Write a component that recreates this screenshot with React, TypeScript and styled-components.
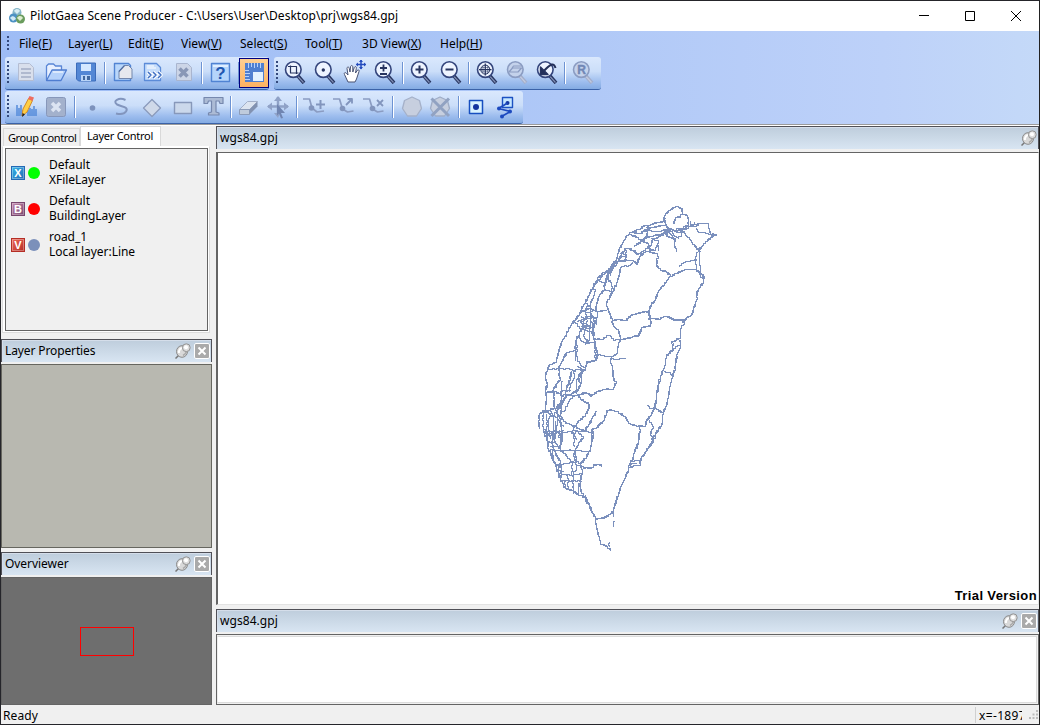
import React from "react";
import styled, { createGlobalStyle } from "styled-components";

const Global = createGlobalStyle`
  *{box-sizing:border-box}
  body{margin:0;background:#f0f0f0;font:12px/15px "Noto Sans","Open Sans",sans-serif;color:#000}
  svg{display:block;flex:none}
`;
const Window = styled.div`
  width:1040px;height:725px;border:1px solid #25252a;border-right-color:#222;
  display:flex;flex-direction:column;background:#f0f0f0;overflow:hidden;
`;
const TitleBar = styled.header`
  height:30px;flex:none;background:#fff;display:flex;align-items:center;padding-left:8px;
`;
const Title = styled.h1`
  font:inherit;font-size:12px;margin:0 auto 0 5px;padding-bottom:1px;white-space:pre;letter-spacing:.035px;
`;
const WinButton = styled.button`
  width:46px;height:29px;border:0;padding:0;background:none;display:grid;place-items:center;
`;
const Bars = styled.div`
  height:95px;flex:none;background:linear-gradient(90deg,#9ebcf5 0%,#a9c4f6 40%,#bdd1f9 85%,#c4d9f8 100%);
  border-bottom:1px solid #fff;box-shadow:inset 0 -1px #9b9b9b;display:flex;flex-direction:column;
`;
const MenuBar = styled.nav`
  height:26px;display:flex;align-items:center;padding-left:6px;
`;
const MenuItem = styled.a<{ $w: number }>`
  width:${p => p.$w}px;margin-right:17px;padding-bottom:2px;white-space:pre;letter-spacing:.02px;flex:none;
`;
const Grip = styled.i<{ $rows: number; $gap: number }>`
  width:3px;height:${p => p.$rows * 4}px;flex:none;margin-right:${p => p.$gap}px;
  background:linear-gradient(#34497c 0 2px,transparent 2px) 0 0/2px 4px repeat-y;
`;
const BarRow = styled.div`display:flex;gap:5px;padding-left:4px;height:34px;`;
const Toolbar = styled.div<{ $w: number; $lift?: number }>`
  width:${p => p.$w}px;height:33px;display:flex;align-items:center;padding-left:2px;flex:none;
  border-radius:3px;background:linear-gradient(#dae8fd 0%,#cbdef9 45%,#9dbdee 78%,#84abe3 100%);
  border-bottom:1px solid #3a62a8;
  & svg{margin-bottom:${p => p.$lift ?? 0}px}
`;
const ToolButton = styled.button<{ $on?: boolean }>`
  width:30px;height:30px;padding:0;flex:none;display:grid;place-items:center;
  border:${p => (p.$on ? "1px solid #000080" : "0")};
  background:${p => (p.$on ? "linear-gradient(#ffd092,#fdb262)" : "none")};
`;
const Sep = styled.i<{ $w?: number }>`
  width:${p => p.$w ?? 6}px;height:22px;flex:none;
  background:linear-gradient(90deg,#6d93d3 0 1px,#fff 1px 2px) 3px 0/2px 100% no-repeat;
`;
const Body = styled.main`flex:1;min-height:0;display:flex;`;
const Side = styled.aside`width:211px;flex:none;display:flex;flex-direction:column;`;
const Work = styled.section`width:823px;margin-left:4px;flex:none;display:flex;flex-direction:column;`;
const Tabs = styled.div`height:20px;display:flex;align-items:flex-end;padding-left:2px;flex:none;`;
const Tab = styled.div<{ $on?: boolean; $w: number }>`
  width:${p => p.$w}px;height:${p => (p.$on ? 20 : 18)}px;line-height:${p => (p.$on ? 18 : 17)}px;
  background:${p => (p.$on ? "#fff" : "#f0f0f0")};border:1px solid #d9d9d9;border-bottom:0;
  padding-left:${p => (p.$on ? 6 : 4)}px;font-size:11px;letter-spacing:${p => (p.$on ? -0.25 : -0.4)}px;white-space:nowrap;
`;
const TabPage = styled.div`
  height:187px;width:208px;margin-left:1px;flex:none;padding:1px 1px 1px 2px;background:#fff;border:1px solid #dcdcdc;border-top-color:#fff;
`;
const List = styled.ul`
  margin:0;padding:7px 0 0 5px;list-style:none;height:183px;width:203px;border:1px solid #646464;background:#f0f0f0;
`;
const Item = styled.li`height:36px;display:flex;align-items:center;padding-bottom:4px;letter-spacing:-.04px;`;
const Dot = styled.i<{ $c: string }>`
  width:12px;height:12px;border-radius:50%;background:${p => p.$c};margin:2px 9px 0 3px;
`;
const Square = styled.i<{ $a: string; $b: string }>`
  width:14px;height:14px;margin-top:2px;border:1px solid ${p => p.$b};
  background:linear-gradient(135deg,${p => p.$a},${p => p.$b});display:grid;place-items:center;
  font:bold 11px/12px "Liberation Sans",sans-serif;color:#fff;box-shadow:inset 0 0 0 1px #ffffff50;
`;
const Caption = styled.div<{ $mt?: number }>`
  height:23px;flex:none;margin-top:${p => p.$mt ?? 0}px;display:flex;align-items:center;padding:0 1px 1px 3px;
  border:1px solid #505057;border-bottom:0;background:linear-gradient(#becddc,#d8e5f2);
  box-shadow:inset 1px 1px #d5deea;
`;
const Grow = styled.span<{ $ls?: number }>`flex:1;letter-spacing:${p => p.$ls ?? 0}px;`;
const CloseBox = styled.button`
  width:16px;height:16px;margin-left:3px;padding:0;border:1px solid #fff;border-radius:2px;background:#aaa;
  display:grid;place-items:center;
`;
const Pane = styled.div<{ $h: number; $bg: string }>`
  height:${p => p.$h}px;margin-top:2px;flex:none;background:${p => p.$bg};
  border:1px solid #66665f;
`;
const Overview = styled(Pane)`border-color:#646464;padding:49px 0 0 78px;`;
const Extent = styled.div`width:54px;height:29px;border:1px solid #f00;`;
const MapView = styled.div`
  height:453px;margin-top:3px;flex:none;background:#fff;border:solid #646464;border-width:1px 1px 1px 2px;
  border-right-color:#e3e3e3;border-bottom-color:#e3e3e3;position:relative;
`;
const Trial = styled.strong`
  position:absolute;right:1px;bottom:1px;font:bold 13px/15px "Liberation Sans",sans-serif;letter-spacing:.38px;
`;
const Lower = styled.div`
  height:71px;margin-top:2px;flex:none;border:1px solid #646464;background:#f0f0f0;padding:1px 1px 1px 0;
  & > div{height:100%;background:#fff;border:1px solid #dcdcdc;border-left:1px solid #eee}
`;
const Status = styled.footer`
  height:19px;flex:none;display:flex;align-items:center;padding:1px 0 0 2px;
`;
const Coord = styled.div`
  width:64px;height:16px;border-left:1px solid #d0d0d0;padding-left:3px;display:flex;align-items:center;
`;
const Clip = styled.span`width:43px;overflow:hidden;white-space:nowrap;margin-right:7px;letter-spacing:.35px;`;

const N = "#34457c";
const G = "#8b9cc2";

const Svg = ({ children, s = 24 }: { children: React.ReactNode; s?: number }) => (
  <svg width={s} height={s} viewBox={`0 0 ${s} ${s}`} fill="none" strokeLinejoin="round">{children}</svg>
);
const Lens = ({ children, off }: { children?: React.ReactNode; off?: boolean }) => (
  <Svg>
    <path d="M16 16 22 23" stroke={off ? "#a3aecb" : "#27345f"} strokeWidth="3.600" />
    <path d="M16 16.500 21.500 22.500" stroke={off ? "#c2cbe0" : "#8090b6"} strokeWidth="1.200" />
    <circle cx="11.3" cy="9.6" r="7.8" fill={off ? "#c4d2eb" : "#eef4ff"} stroke={off ? G : N} strokeWidth="1.6" />
    <g stroke={off ? G : "#27345f"} strokeWidth="1.4">{children}</g>
  </Svg>
);

const icons: Record<string, React.ReactNode> = {
  doc: <Svg><path d="M4.500 3.500h11l4 4v13h-15z" fill="#d9dfec" stroke="#b4bdd2" /><path d="M7 9h10M7 13h10M7 17h10" stroke="#a3adc5" strokeWidth="1.6" /></Svg>,
  open: <Svg><path d="M2.500 20V6l2-2h5l2 2h6v4" fill="#e8f0ff" stroke="#5a86d6" strokeWidth="1.300" /><path d="M2.500 20.500 8 10h14.500L17 20.500z" fill="#b5d2fb" stroke="#4f7dd0" strokeWidth="1.300" /><path d="m9 12h10" stroke="#fff" /></Svg>,
  save: <Svg><path d="M2.500 3h19v18h-17l-2-2z" fill="#5387d5" stroke="#3c6cba" /><path d="M7 4h10v7H7z" fill="#d5e8ff" /><path d="M7 15h10v6H7z" fill="#b9d4f7" /><path d="M9 16h2v4H9zM13 16h3v4h-3z" fill="#41689f" /></Svg>,
  page: <Svg><path d="M3.500 3.500h14l2 2v15h-16z" fill="#b9d7fb" stroke="#5184d3" strokeWidth="1.400" /><path d="M8 18.500V11l5.500-5.500h4l3.500 3.500v9.500z" fill="#e6e8ee" stroke="#7387ac" /><path d="M8 11.500 13.500 5.500" stroke="#4f6b9f" strokeWidth="1.300" /></Svg>,
  pageNext: <Svg><path d="M3.500 3.500h12l4 4v13h-16z" fill="#c6ddfb" stroke="#5b8bd8" strokeWidth="1.300" /><path d="M6 6h7M6 8h9" stroke="#fff" /><path d="m7 12 3 3-3 3m5-6 3 3-3 3m5-6 3 3-3 3" stroke="#fff" strokeWidth="3.500" /><path d="m7 12 3 3-3 3m5-6 3 3-3 3m5-6 3 3-3 3" stroke="#3e6fc3" strokeWidth="1.500" /></Svg>,
  pageX: <Svg><path d="M5.500 3.500h11l4 4v13h-15z" fill="#ccd5e7" stroke="#a9b5cf" /><path d="m8.500 8.500 8 8m0-8-8 8" stroke="#8997b6" strokeWidth="3.600" /></Svg>,
  help: <Svg><path d="M3.500 3.500h18v18h-18z" fill="#b5d5fb" stroke="#5083d3" strokeWidth="1.400" /><path d="M5 5h15v2H5z" fill="#dfeeff" /><text x="12.500" y="18.500" textAnchor="middle" fontFamily="Liberation Sans" fontWeight="bold" fontSize="17" fill="#1f57b0">?</text></Svg>,
  ruler: <Svg><path d="M3 3h19v19H3z" fill="#4f7fd0" /><path d="M6.500 3v5m3-5v4m3-4v5m3-5v4m3-4v5M3 10.500h4m-4 3h5m-5 3h4m-4 3h5" stroke="#b8d2fa" /><path d="M11 12h10v9H11z" fill="#e2f1ff" /></Svg>,
  zoomRect: <Lens><path d="M8.500 5.500v7.500h8M6 6.500h8.500v7.500" strokeWidth="1.200" /></Lens>,
  zoomDot: <Lens><circle cx="11.300" cy="10" r="1" fill={N} /></Lens>,
  hand: <Svg><path d="M6 22 2.500 14.500c-1-2 1-2.500 2-1L6 15 5 8.500c0-2 2-2 2.300 0L8 12l.5-5c.2-2 2.200-2 2.300 0v5l1.500-4.500c.7-1.500 2.400-1 2 .8L13.500 13l1.700-2.500c1-1.300 2.500-.3 1.800 1L14.500 19l-1.500 3z" fill="#fff" stroke="#485273" /><path d="M19 0v9M14.500 4.500h9" stroke="#244bbd" strokeWidth="1.500" /><path d="m17 2 2-2.500L21 2zm0 5 2 2.500L21 7zm-1-4.500L13.800 4.500 16 6.500zm6 0 2.200 2-2.200 2z" fill="#244bbd" /></Svg>,
  zoomPm: <Lens><path d="M8 8h7M11.500 4.500v7M8 14h7" strokeWidth="1.800" /></Lens>,
  zoomIn: <Lens><path d="M7.500 9.500h8M11.500 5.500v8" strokeWidth="2" /></Lens>,
  zoomOut: <Lens><path d="M7.500 9.500h8" strokeWidth="2" /></Lens>,
  globe: <Lens><circle cx="11.300" cy="9.600" r="4.500" strokeWidth="1" /><path d="M11.300 3.500v12M5 9.600h12.500" strokeWidth="1.200" /><path d="M9 6v7M13.700 6v7M7.500 7.500h7.500M7.500 11.800h7.500" strokeWidth=".5" /></Lens>,
  layerZoom: <Lens off><path d="m5 12 3.500-4h9L14 12zM8 8l1.500-2h8" strokeWidth="1.200" /></Lens>,
  back: <Lens><path d="M21.500 8C20 2 16 4 9 12" stroke="#232f58" strokeWidth="2" /><path d="m6.500 7v7.500H14z" fill="#232f58" /></Lens>,
  reset: <Lens off><text x="11.500" y="14" textAnchor="middle" fontFamily="Liberation Sans" fontWeight="bold" fontSize="12" fill="#7187b5" stroke="#7187b5" strokeWidth=".4">R</text></Lens>,
  edit: <Svg><path d="M3 10v11m2-8v8m2-11v11m2-6v6m5-6v6m2-8v8m2-7v7m2-10v10m2-7v7" stroke="#4d86d8" strokeWidth="1.400" /><path d="m8 21 1-7 5.500-10.500 4 2L13 17z" fill="#ffcf45" stroke="#d18a27" /><path d="m14 4 1.500-3 4.500 1.500L18.500 6z" fill="#ee6e60" /><path d="m8 22 .6-4 2.400 1.500z" fill="#222" /></Svg>,
  box: <Svg><rect x="2.500" y="2.500" width="19" height="19" rx="2" fill="#a3b1cc" stroke="#8797ba" /><path d="m8 8 8 8m0-8-8 8" stroke="#dce4f2" strokeWidth="3.500" /></Svg>,
  dot: <Svg><circle cx="12.500" cy="13" r="2.800" fill="#7d92bc" /></Svg>,
  curve: <Svg><path d="M15.500 5C9 2 2 6 7 9.500c5 2.500 12 2 9 7-2 3-6 3-10 2" stroke="#8295bd" strokeWidth="2" /></Svg>,
  diamond: <Svg><path d="m3.500 13 8.500-8.500 8.500 8.500-8.500 8.500z" fill="#cfd9e9" stroke="#8b9bbc" strokeWidth="1.300" /></Svg>,
  rect: <Svg><path d="M4.500 7.500h17v11h-17z" fill="#cbd8eb" stroke="#8798ba" strokeWidth="1.400" /></Svg>,
  text: <Svg><path d="M4 2.500h19v6h-3L19 6h-3v11l3 1v2H8.500v-2l3-1V6h-3l-1 2.500H4z" fill="#acbbd5" stroke="#7688ae" strokeWidth="1.200" /></Svg>,
  erase: <Svg><path d="m3.500 14.500 8-8h10l-8 8z" fill="#dce4f0" stroke="#a3b0c9" /><path d="M3.500 14.500h10v5h-10z" fill="#bfcbdc" stroke="#8c9cb9" /><path d="m13.500 14.500 8-8v5l-8 8z" fill="#8292b1" /></Svg>,
  move: <Svg><path d="M12 2v19M2 11.500h20" stroke="#90a2c7" strokeWidth="2.500" /><path d="m8 6 4-5 4 5zm-2 1.500-5 4 5 4zm12 0 5 4-5 4zM8 18l4 5 2-5z" fill="#90a2c7" /><path d="m11 9 8 9h-4l2 5-2 .5-2-5-2 2z" fill="#7085b1" /></Svg>,
  nodeAdd: <Svg><path d="M1 4h6.500l2.500 9 5 4 7-1" stroke={G} strokeWidth="1.700" /><circle cx="9.500" cy="13" r="2.800" fill="#8295bd" /><path d="M14 9.500h9M18.500 5v9" stroke="#8295bd" strokeWidth="2" /></Svg>,
  nodeMove: <Svg><path d="M1 4h6.500l3 10 5 3 6-1" stroke={G} strokeWidth="1.700" /><circle cx="10.500" cy="13.500" r="2.800" fill="#8295bd" /><path d="m14 10 6-6m-4.500 0H20v4.500" stroke="#8295bd" strokeWidth="1.800" /></Svg>,
  nodeDel: <Svg><path d="M1 4h6.500l3 10 5 3 6-1" stroke={G} strokeWidth="1.700" /><circle cx="10.500" cy="13.500" r="2.800" fill="#8295bd" /><path d="m15 5 6 6m0-6-6 6" stroke="#8295bd" strokeWidth="1.800" /></Svg>,
  poly: <Svg><path d="m14 2 7.500 3.500 2 8-5 7.500h-9l-5-7.500 2-8z" fill="#c7cfdf" stroke="#a5b1c9" strokeWidth="1.300" /></Svg>,
  polyX: <Svg><path d="m12 2 7.500 3.500 2 8-5 7.500h-9l-5-7.500 2-8z" fill="#c7cfdf" stroke="#a0adc6" strokeWidth="1.300" /><path d="M3.500 3.500 21 21M21 3.500 3.500 21" stroke="#91a2c2" strokeWidth="3" /></Svg>,
  point: <Svg><path d="M5.500 5.500h13v13h-13z" fill="#d9f2ff" stroke="#174fc0" strokeWidth="1.500" /><circle cx="12" cy="12" r="3" fill="#14359f" /></Svg>,
  link: <Svg><path d="M8.500 2.500h10v10h-10z" fill="#c6e7ff" stroke="#1c52c2" strokeWidth="1.400" /><circle cx="13.500" cy="8" r="2" fill="#14359f" /><path d="m13.500 8-9 5.500 12 3-9 5" stroke="#1d4abf" strokeWidth="1.800" /><circle cx="5" cy="13.500" r="2" fill="#1d4abf" /><circle cx="16" cy="16.500" r="2" fill="#1d4abf" /><circle cx="8" cy="21.500" r="2" fill="#1d4abf" /></Svg>,
};

const Tools = ({ names, sep }: { names: string[]; sep?: number }) => (
  <>{names.map((n, i) => n === "|" ? <Sep key={i} $w={sep} /> : <ToolButton key={i}>{icons[n]}</ToolButton>)}</>
);
const PushPin = () => (
  <Svg s={16}>
    <path d="m.5 15.500 4-4" stroke="#777" strokeWidth="1.500" />
    <ellipse cx="7" cy="8.500" rx="5.500" ry="5.800" fill="#d9d9d9" stroke="#8a8a8a" />
    <path d="M3.800 10C4 6.500 6 5 8 5" stroke="#fff" strokeWidth="2" />
    <path d="M8 12.500c2-1 3-2 3.500-4" stroke="#aaa" strokeWidth="1.500" />
    <circle cx="11.300" cy="4.700" r="3.900" fill="#ddd" stroke="#929292" />
    <circle cx="11" cy="4.200" r="2" fill="#fff" />
  </Svg>
);
const Close = () => <CloseBox><Svg s={10}><path d="m1.500 1.500 7 7m0-7-7 7" stroke="#fff" strokeWidth="2" /></Svg></CloseBox>;

/* Road polylines in third-pixel units, grouped by map sheet. */
const sheets: { y: number; roads: string[] }[] = [
  { y: 42, roads: [
    "400,75 406,55 420,42 440,33 456,44 458,58 472,64 476,75 474,90 460,100 440,103",
    "432,85 436,68 448,66 452,58 458,58",
    "405,70 402,78 385,83 362,90 348,92 330,102 310,112 298,118 286,132 275,152 265,172 260,195 250,212 235,228 215,240 203,255 190,278 178,300 165,325 155,345 148,362 125,390",
    "412,103 395,108 380,110 366,108 350,93", "298,118 320,128 330,138 350,122 352,92",
    "412,105 400,115 385,128 368,135 365,150 352,160 340,170 325,178 310,165 290,160",
    "300,112 330,115 352,100 380,95 402,88", "310,155 330,140 348,128 370,122 395,120 412,108",
    "290,160 275,180 265,200 255,215 240,225 232,245 228,262 222,285 205,310 198,335 198,350",
    "262,200 290,195 305,195 320,208 328,185 345,168 362,172 380,175 384,190 378,210 390,225 410,232 422,243",
    "278,215 270,222 268,240 262,262 250,290 238,312 228,330 234,348 246,376 265,374 285,376 300,362 320,354 355,350 362,370 385,372 405,364 430,374 462,374",
    "278,215 300,212 306,198",
    "422,243 450,228 470,222 500,225 510,235 522,250 520,265 508,280 500,295 500,320 490,345 485,362 465,375 462,388",
    "422,243 402,270 385,292 375,315 358,345 355,352", "412,103 430,120 445,130 458,108",
    "455,108 470,125 485,142 505,168 520,145 540,128 558,118", "480,92 495,88 510,86 535,86 540,118 558,118",
    "495,100 505,112 525,115 540,118", "445,215 465,198 498,196", "503,168 497,190 500,230 518,250", "510,170 508,200 510,225",
    "412,108 410,125 435,135 432,150 440,168", "385,150 375,165 360,165 355,145 340,140 345,125",
    "290,160 285,185 270,180", "245,210 248,225 240,240", "225,240 240,262 248,280 245,288 222,285",
    "203,255 215,262 228,262", "190,278 195,290 190,310 180,330 165,345", "150,350 165,345 180,340 200,350 228,345",
    "402,76 410,98 430,105 446,112 470,95 490,88 510,86", "408,100 425,102 440,108", "415,108 428,128", "406,90 420,108 405,118",
    "478,80 485,95 505,90 492,80", "440,105 465,102 478,92",
    "160,325 178,335 185,360 195,385", "140,380 160,370 180,365 200,372", "165,345 168,365 160,388",
    "182,340 180,388", "205,350 198,388", "262,202 246,216 232,236", "256,200 240,220 215,248 190,280",
    "264,200 242,232 234,250 220,275", "268,175 290,182 285,200", "360,130 385,140 385,165", "358,150 362,172",
    "155,350 175,352 190,345", "150,365 165,372 195,368", "145,375 170,388",
    "355,365 362,388",
  ]},
  { y: 167, roads: [
    "135,0 120,22 110,45 95,70 85,100 78,128 55,142 45,175 52,195 46,215 50,245 45,270 28,285 27,325",
    "150,0 160,20 148,45 138,60 135,90 110,100 98,125 85,148 90,180 70,210 72,240 72,265",
    "135,75 138,110 150,135 165,148", "195,0 190,30 192,65 200,90 200,122 175,125 165,150 145,170 150,195 145,210 125,222 100,240 80,265 60,270 40,280",
    "190,55 215,58 235,45 250,60 275,58 300,52 325,45 335,22 362,15 362,0",
    "245,0 250,18 265,35 272,58 262,85 262,100 245,115 240,125 248,150 250,175 258,190 250,208 230,208 205,215 182,228",
    "200,105 235,108 250,118 285,116", "55,148 90,145 130,150 165,150", "45,217 75,215 95,225 130,228 165,218 185,228",
    "140,222 150,238 175,250 178,265 165,290 150,300 135,320",
    "428,0 455,0 462,12 452,30 452,55 440,62 425,70", "428,70 428,90 410,110 405,135 400,150 385,195 380,230 375,265 400,282 395,320 375,345 365,358",
    "450,60 450,85 440,110 435,150 428,175 420,200 415,230 410,260 400,282", "400,155 418,158 428,175", "420,100 435,80 450,72",
    "350,255 358,265 375,262 365,285 350,305 345,318 325,318 300,310 285,290 265,275 240,268 228,285 220,305 200,325 185,335 185,358",
    "355,300 370,325 360,345", "325,318 330,335 325,358", "200,275 185,300 175,320 165,335 150,335 130,330",
    "125,150 120,180 110,210 105,235 95,260 90,290 100,305 135,320 165,335", "160,150 140,185 140,220", "96,185 92,225 90,215 120,212",
    "135,155 130,180 118,215", "158,160 152,200", "130,230 115,250 105,270 92,285",
    "40,280 38,320 45,340 60,350", "50,270 60,290 55,320 60,355", "60,270 70,300 70,358", "75,265 85,290 80,330 90,358",
    "40,270 60,285 85,300 100,320", "45,335 90,335 130,335", "100,240 80,280 92,300", "100,225 90,260 70,290", "135,320 125,340 140,358",
    "150,20 180,15 178,60 165,70 190,65", "170,0 170,25 160,50 175,65", "135,5 150,30 185,35 192,60", "185,0 188,30", "155,20 175,25 190,18",
    "146,45 150,60 165,72", "140,55 140,100 136,120", "195,68 195,120 180,122", "88,295 95,330 92,358", "50,280 50,350", "76,300 76,356", "140,140 158,152 150,172", "152,335 190,335",
  ]},
  { y: 277, roads: [
    "38,0 42,15 52,35 55,60 65,80 75,105 85,130 90,150 105,175 125,182 145,195 165,207 178,230 188,250 195,268 200,290 205,320 212,342 230,350 242,360",
    "195,268 220,265 240,250 250,242 252,225 265,195 272,170 285,140 295,120 300,95 308,88 312,65 325,35 330,0",
    "365,0 362,15 370,35 355,55 335,85 330,105 310,108 295,115", "382,0 375,25 362,48", "300,95 320,92 335,92", "300,102 318,98",
    "250,242 250,258", "252,275 250,290", "237,335 237,350", "185,0 190,20 182,60 168,85 150,105 160,115 185,112 198,102 215,108",
    "135,0 145,10 160,25 145,45 135,60 138,90 150,105", "55,60 90,62 130,60 180,65",
    "60,0 70,20 65,40 75,70 90,95 95,125 92,150", "75,0 75,40 90,60", "85,0 95,25 90,60 110,80 120,95", "100,0 95,40", "52,5 55,60",
    "75,105 100,100 125,95 150,98", "90,135 125,135 155,130", "90,150 130,152 155,155", "125,95 125,135 130,155 130,190",
    "150,100 158,125 150,160 155,190 165,207", "110,130 115,175", "130,60 135,95", "105,175 105,150", "45,10 80,10", "50,35 75,38", "134,5 132,50",
    "58,50 85,50", "65,65 72,100 85,108", "90,100 85,120 100,125", "135,85 140,120 130,130", "148,160 145,190", "138,105 155,112", "162,195 182,232",
  ]},
];

/* Walks each road on the pixel grid in short stair steps with a slight wobble; long roads get a second pass. */
let seed = 7;
const rnd = () => ((seed = (seed * 16807) % 2147483647) / 2147483647 - 0.5) * 2;
const snap = (v: number) => Math.floor(v) + 0.5;
const walk = (pts: number[][], wobble: number) => {
  let d = `M${snap(pts[0][0])} ${snap(pts[0][1])}`;
  for (let i = 1; i < pts.length; i++) {
    const [ax, ay] = pts[i - 1], [bx, by] = pts[i];
    const n = Math.max(1, Math.round(Math.hypot(bx - ax, by - ay) / 2));
    for (let k = 1; k <= n; k++) {
      const j = k === n ? 0 : wobble;
      d += `H${snap(ax + (bx - ax) * k / n + rnd() * j)}V${snap(ay + (by - ay) * k / n + rnd() * j)}`;
    }
  }
  return d;
};
const roads = sheets.flatMap(({ y, roads: list }) => list.map(r => {
  const pts = r.split(" ").map(p => p.split(",").map(Number)).map(([a, b]) => [a / 3 + 312, b / 3 + y]);
  return walk(pts, 0.6) + (pts.length > 4 ? walk(pts, 0.6) : "");
})).join("");

const menus: [string, string, number][] = [["File", "F", 32], ["Layer", "L", 43], ["Edit", "E", 36], ["View", "V", 42], ["Select", "S", 48], ["Tool", "T", 40], ["3D View", "X", 61], ["Help", "H", 43]];
const layers = [
  ["X", "#35b5e8", "#2469b5", "#00ff00", "Default", "XFileLayer"],
  ["B", "#c58ab0", "#79476f", "#ff0000", "Default", "BuildingLayer"],
  ["V", "#ee6a58", "#b52d25", "#7b90ba", "road_1", "Local layer:Line"],
];

export default function App() {
  return (
    <Window>
      <Global />
      <TitleBar>
        <Svg s={16}>
          <circle cx="8" cy="4.500" r="4.500" fill="#85b5c8" /><path d="M5 3c2-3 5-2 6 0L8 6z" fill="#d7edf4" />
          <circle cx="4.500" cy="10" r="4.500" fill="#4c91c3" /><path d="M1 10c2-3 5-2 6 1l-3 2z" fill="#d1e9f5" />
          <circle cx="11.500" cy="11" r="4.500" fill="#6a9c5d" /><path d="M8 10c2-3 5-2 6 0l-3 3z" fill="#dceccf" />
        </Svg>
        <Title>PilotGaea Scene Producer - C:\Users\User\Desktop\prj\wgs84.gpj</Title>
        <WinButton><Svg s={10}><path d="M0 4.500h10" stroke="#000" /></Svg></WinButton>
        <WinButton><Svg s={10}><path d="M.5.5h9v9h-9z" stroke="#000" /></Svg></WinButton>
        <WinButton><Svg s={10}><path d="m0 0 10 10M10 0 0 10" stroke="#000" /></Svg></WinButton>
      </TitleBar>
      <Bars>
        <MenuBar>
          <Grip $rows={4} $gap={9} />
          {menus.map(([t, k, w]) => <MenuItem key={t} $w={w}>{t}(<u>{k}</u>)</MenuItem>)}
        </MenuBar>
        <BarRow>
          <Toolbar $w={264} $lift={2}>
            <Grip $rows={6} $gap={1} />
            <Tools sep={7} names={["doc", "open", "save", "|", "page", "pageNext", "pageX", "|", "help"]} />
            <Sep $w={4} />
            <ToolButton $on>{icons.ruler}</ToolButton>
          </Toolbar>
          <Toolbar $w={327} $lift={2}>
            <Grip $rows={6} $gap={0} />
            <Tools names={["zoomRect", "zoomDot", "hand", "zoomPm", "|", "zoomIn", "zoomOut", "|", "globe", "layerZoom", "back", "|", "reset"]} />
          </Toolbar>
        </BarRow>
        <BarRow>
          <Toolbar $w={518}>
            <Grip $rows={6} $gap={1} />
            <Tools names={["edit", "box", "|", "dot", "curve", "diamond", "rect", "text", "|", "erase", "move", "|", "nodeAdd", "nodeMove", "nodeDel", "|", "poly", "polyX", "|", "point", "link"]} />
          </Toolbar>
        </BarRow>
      </Bars>
      <Body>
        <Side>
          <Tabs>
            <Tab $w={77}>Group Control</Tab>
            <Tab $w={81} $on>Layer Control</Tab>
          </Tabs>
          <TabPage>
            <List>
              {layers.map(([l, a, b, c, n, s]) => (
                <Item key={l}>
                  <Square $a={a} $b={b}>{l}</Square>
                  <Dot $c={c} />
                  <span>{n}<br />{s}</span>
                </Item>
              ))}
            </List>
          </TabPage>
          <Caption $mt={6}><Grow $ls={-0.12}>Layer Properties</Grow><PushPin /><Close /></Caption>
          <Pane $h={184} $bg="#b8b8b0" />
          <Caption $mt={4}><Grow $ls={-0.05}>Overviewer</Grow><PushPin /><Close /></Caption>
          <Overview $h={128} $bg="#6e6e6e"><Extent /></Overview>
        </Side>
        <Work>
          <Caption><Grow $ls={0.06}>wgs84.gpj</Grow><PushPin /></Caption>
          <MapView>
            <svg width="819" height="450" shapeRendering="crispEdges">
              <path d={roads} fill="none" stroke="#7b90bd" strokeWidth="1" />
            </svg>
            <Trial>Trial Version</Trial>
          </MapView>
          <Caption $mt={4}><Grow $ls={0.06}>wgs84.gpj</Grow><PushPin /><Close /></Caption>
          <Lower><div /></Lower>
        </Work>
      </Body>
      <Status>
        <Grow $ls={0.12}>Ready</Grow>
        <Coord>
          <Clip>x=-1897</Clip>
          <Svg s={10}><path d="M7 0h2v2H7zM3.500 3.500h2v2h-2zM7 3.500h2v2H7zM0 7h2v2H0zM3.500 7h2v2h-2zM7 7h2v2H7z" fill="#bbb" /></Svg>
        </Coord>
      </Status>
    </Window>
  );
}
